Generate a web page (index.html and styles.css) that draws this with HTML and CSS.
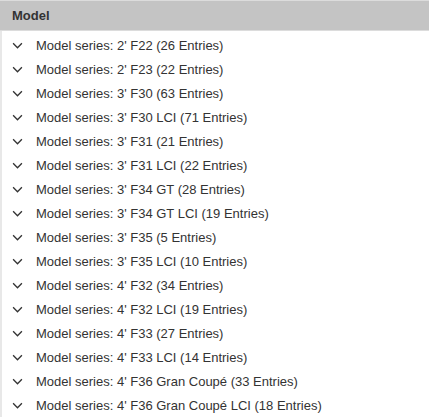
FILE: index.html
```html
<!DOCTYPE html>
<html>
<head>
<meta charset="utf-8">
<link rel="stylesheet" href="styles.css">
</head>
<body>
<div class="panel">
  <div class="header">Model</div>
  <ul class="list">
    <li class="row"><svg class="chev" viewBox="0 0 10 6"><path d="M1 1 L5 5 L9 1"/></svg><span>Model series: 2' F22 (26 Entries)</span></li>
    <li class="row"><svg class="chev" viewBox="0 0 10 6"><path d="M1 1 L5 5 L9 1"/></svg><span>Model series: 2' F23 (22 Entries)</span></li>
    <li class="row"><svg class="chev" viewBox="0 0 10 6"><path d="M1 1 L5 5 L9 1"/></svg><span>Model series: 3' F30 (63 Entries)</span></li>
    <li class="row"><svg class="chev" viewBox="0 0 10 6"><path d="M1 1 L5 5 L9 1"/></svg><span>Model series: 3' F30 LCI (71 Entries)</span></li>
    <li class="row"><svg class="chev" viewBox="0 0 10 6"><path d="M1 1 L5 5 L9 1"/></svg><span>Model series: 3' F31 (21 Entries)</span></li>
    <li class="row"><svg class="chev" viewBox="0 0 10 6"><path d="M1 1 L5 5 L9 1"/></svg><span>Model series: 3' F31 LCI (22 Entries)</span></li>
    <li class="row"><svg class="chev" viewBox="0 0 10 6"><path d="M1 1 L5 5 L9 1"/></svg><span>Model series: 3' F34 GT (28 Entries)</span></li>
    <li class="row"><svg class="chev" viewBox="0 0 10 6"><path d="M1 1 L5 5 L9 1"/></svg><span>Model series: 3' F34 GT LCI (19 Entries)</span></li>
    <li class="row"><svg class="chev" viewBox="0 0 10 6"><path d="M1 1 L5 5 L9 1"/></svg><span>Model series: 3' F35 (5 Entries)</span></li>
    <li class="row"><svg class="chev" viewBox="0 0 10 6"><path d="M1 1 L5 5 L9 1"/></svg><span>Model series: 3' F35 LCI (10 Entries)</span></li>
    <li class="row"><svg class="chev" viewBox="0 0 10 6"><path d="M1 1 L5 5 L9 1"/></svg><span>Model series: 4' F32 (34 Entries)</span></li>
    <li class="row"><svg class="chev" viewBox="0 0 10 6"><path d="M1 1 L5 5 L9 1"/></svg><span>Model series: 4' F32 LCI (19 Entries)</span></li>
    <li class="row"><svg class="chev" viewBox="0 0 10 6"><path d="M1 1 L5 5 L9 1"/></svg><span>Model series: 4' F33 (27 Entries)</span></li>
    <li class="row"><svg class="chev" viewBox="0 0 10 6"><path d="M1 1 L5 5 L9 1"/></svg><span>Model series: 4' F33 LCI (14 Entries)</span></li>
    <li class="row"><svg class="chev" viewBox="0 0 10 6"><path d="M1 1 L5 5 L9 1"/></svg><span>Model series: 4' F36 Gran Coupé (33 Entries)</span></li>
    <li class="row"><svg class="chev" viewBox="0 0 10 6"><path d="M1 1 L5 5 L9 1"/></svg><span>Model series: 4' F36 Gran Coupé LCI (18 Entries)</span></li>
  </ul>
</div>
</body>
</html>
```
FILE: styles.css
```css
html, body {
  margin: 0;
  padding: 0;
  background: #fff;
}
body {
  font-family: "Liberation Sans", Arial, sans-serif;
  color: #333;
}
.panel {
  width: 429px;
  height: 419px;
  overflow: hidden;
}
.header {
  height: 29px;
  border-top: 1px solid #dcdcdc;
  border-bottom: 1px solid #dcdcdc;
  background: #c4c4c4;
  font-size: 13px;
  font-weight: bold;
  line-height: 29px;
  padding-left: 12px;
  color: #333;
}
.list {
  list-style: none;
  margin: 0;
  padding: 2px 0 0 0;
  border-left: 2px solid #e8e8e8;
}
.row {
  height: 24px;
  display: flex;
  align-items: center;
  font-size: 13px;
  padding-left: 10px;
}
.chev {
  width: 11px;
  height: 7px;
  margin-right: 13px;
  fill: none;
  stroke: #333;
  stroke-width: 1.2;
}
```
